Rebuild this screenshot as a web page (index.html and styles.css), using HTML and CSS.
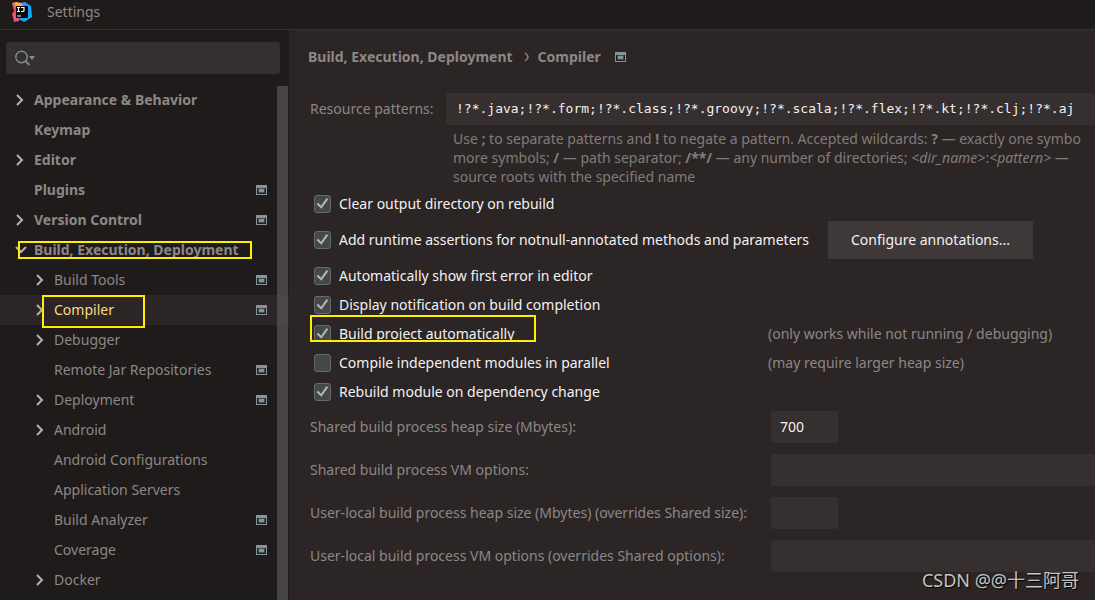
FILE: index.html
```html
<!DOCTYPE html>
<html lang="en">
<head>
<meta charset="utf-8">
<title>Settings</title>
<link rel="stylesheet" href="styles.css">
</head>
<body>
<svg class="defs" aria-hidden="true">
  <symbol id="chevron" viewBox="0 0 10 12"><path d="M2 1l5 5-5 5" fill="none" stroke="currentColor" stroke-width="2"/></symbol>
  <symbol id="chevron-down" viewBox="0 0 12 10"><path d="M1 2l5 5 5-5" fill="none" stroke="currentColor" stroke-width="2"/></symbol>
  <symbol id="project" viewBox="0 0 11 10"><path d="M0 0h11v10H0z" fill="#87939a"/><path d="M1 3h9v6H1z" fill="#231f1f"/><path d="M3 4h5v3H3z" fill="#87939a"/><path d="M2.500 3.500h6v4h-6z" fill="none" stroke="#46494b"/></symbol>
</svg>
<div class="window">
  <header class="titlebar">
    <svg class="logo" viewBox="0 0 20 20" aria-hidden="true">
      <defs>
        <linearGradient id="warm" x1="0" y1="0" x2="0" y2="1"><stop offset="0" stop-color="#fc8f35"/><stop offset=".4" stop-color="#e93b73"/><stop offset=".7" stop-color="#f45b45"/><stop offset="1" stop-color="#d84cc0"/></linearGradient>
        <linearGradient id="cool" x1="0" y1="0" x2="1" y2="1"><stop offset="0" stop-color="#a66ad8"/><stop offset=".4" stop-color="#139dff"/><stop offset="1" stop-color="#08b8f2"/></linearGradient>
      </defs>
      <path d="M0 1l4-1 4 2 2 8-3 9-5 1-1-5L0 12l2-3z" fill="url(#warm)"/>
      <path d="M8 1l5-1 6 4 1 11-8 5-5-3z" fill="url(#cool)"/>
      <path d="M4 0l5 1 2 3H3z" fill="#ffb340"/>
      <path d="M4 4h12v12H4z" fill="#080408"/>
      <path d="M5 5.500h3M6.500 5.500v4M5 9.500h3M9 5.500h3v3q0 1-1 1H9M5 14h4" fill="none" stroke="#fff" stroke-width="1.200"/>
    </svg>
    <h1 class="title">Settings</h1>
  </header>
  <div class="body">
    <aside class="sidebar">
      <div class="search">
        <svg class="search-icon" viewBox="0 0 20 16" aria-hidden="true"><circle cx="6.500" cy="7" r="5.700" fill="none" stroke="#7f8b91" stroke-width="1.400"/><path d="M10.500 11l4 4" stroke="#7f8b91" stroke-width="2"/><path d="M14 6h6l-3 4z" fill="#7f8b91"/></svg>
        <input class="search-input" type="text" aria-label="Search settings">
      </div>
      <div class="tree-area">
        <ul class="tree">
          <li class="node top"><svg class="arrow"><use href="#chevron"/></svg><span>Appearance &amp; Behavior</span></li>
          <li class="node top"><span class="arrow"></span><span>Keymap</span></li>
          <li class="node top"><svg class="arrow"><use href="#chevron"/></svg><span>Editor</span></li>
          <li class="node top"><span class="arrow"></span><span>Plugins</span><svg class="badge"><use href="#project"/></svg></li>
          <li class="node top"><svg class="arrow"><use href="#chevron"/></svg><span>Version Control</span><svg class="badge"><use href="#project"/></svg></li>
          <li class="node top"><svg class="arrow open"><use href="#chevron-down"/></svg><span>Build, Execution, Deployment</span><i class="mark mark-group"></i></li>
          <li class="node"><svg class="arrow"><use href="#chevron"/></svg><span>Build Tools</span><svg class="badge"><use href="#project"/></svg></li>
          <li class="node selected"><svg class="arrow"><use href="#chevron"/></svg><span>Compiler</span><svg class="badge"><use href="#project"/></svg><i class="mark mark-item"></i></li>
          <li class="node"><svg class="arrow"><use href="#chevron"/></svg><span>Debugger</span></li>
          <li class="node"><span class="arrow"></span><span>Remote Jar Repositories</span><svg class="badge"><use href="#project"/></svg></li>
          <li class="node"><svg class="arrow"><use href="#chevron"/></svg><span>Deployment</span><svg class="badge"><use href="#project"/></svg></li>
          <li class="node"><svg class="arrow"><use href="#chevron"/></svg><span>Android</span></li>
          <li class="node"><span class="arrow"></span><span>Android Configurations</span></li>
          <li class="node"><span class="arrow"></span><span>Application Servers</span></li>
          <li class="node"><span class="arrow"></span><span>Build Analyzer</span><svg class="badge"><use href="#project"/></svg></li>
          <li class="node"><span class="arrow"></span><span>Coverage</span><svg class="badge"><use href="#project"/></svg></li>
          <li class="node"><svg class="arrow"><use href="#chevron"/></svg><span>Docker</span></li>
        </ul>
        <div class="scrollbar"></div>
      </div>
    </aside>
    <main class="content">
      <nav class="crumbs"><span>Build, Execution, Deployment</span><svg class="crumb-sep" viewBox="0 0 5 10"><path d="M1 1q3 2 3 4T1 9" fill="none" stroke="currentColor" stroke-width="1.500"/></svg><span>Compiler</span><svg class="crumb-icon"><use href="#project"/></svg></nav>
      <div class="patterns">
        <label for="patterns">Resource patterns:</label>
        <div>
          <input class="field mono" id="patterns" type="text" value="!?*.java;!?*.form;!?*.class;!?*.groovy;!?*.scala;!?*.flex;!?*.kt;!?*.clj;!?*.aj">
          <p class="hint">Use <b>;</b> to separate patterns and <b>!</b> to negate a pattern. Accepted wildcards: <b>?</b> — exactly one symbo<br>more symbols; <b>/</b> — path separator; <b>/**/</b> — any number of directories; <em>&lt;dir_name&gt;</em>:<em>&lt;pattern&gt;</em> —<br>source roots with the specified name</p>
        </div>
      </div>
      <div class="options">
        <div class="option"><label class="check"><input type="checkbox" checked>Clear output directory on rebuild</label></div>
        <div class="option with-button"><label class="check"><input type="checkbox" checked>Add runtime assertions for notnull-annotated methods and parameters</label><button class="button" type="button">Configure annotations...</button></div>
        <div class="option"><label class="check"><input type="checkbox" checked>Automatically show first error in editor</label></div>
        <div class="option"><label class="check"><input type="checkbox" checked>Display notification on build completion</label></div>
        <div class="option"><label class="check cut"><input type="checkbox" checked>Build project automatically</label><span class="note">(only works while not running / debugging)</span><i class="mark mark-option"></i></div>
        <div class="option"><label class="check"><input type="checkbox">Compile independent modules in parallel</label><span class="note">(may require larger heap size)</span></div>
        <div class="option"><label class="check"><input type="checkbox" checked>Rebuild module on dependency change</label></div>
      </div>
      <div class="form">
        <label for="heap">Shared build process heap size (Mbytes):</label><input class="field small" id="heap" type="text" value="700">
        <label for="vm">Shared build process VM options:</label><input class="field" id="vm" type="text">
        <label for="user-heap">User-local build process heap size (Mbytes) (overrides Shared size):</label><input class="field small" id="user-heap" type="text">
        <label for="user-vm">User-local build process VM options (overrides Shared options):</label><input class="field" id="user-vm" type="text">
      </div>
    </main>
  </div>
  <div class="watermark">CSDN @@十三阿哥</div>
</div>
</body>
</html>
```
FILE: styles.css
```css
* { box-sizing: border-box; }
body {
  margin: 0;
  background: #2b2525;
  color: #8d8787;
  font: 14px/20px "Noto Sans", "Open Sans", sans-serif;
}
input, button { font: inherit; color: inherit; border: 0; margin: 0; }
.defs { display: none; }
.window { position: relative; display: flex; flex-direction: column; height: 100vh; overflow: hidden; }
.titlebar {
  display: flex;
  flex: none;
  align-items: center;
  gap: 15px;
  height: 30px;
  padding: 0 12px 6px;
  background: #1f1b1a;
  border-bottom: 1px solid #383131;
}
.logo { width: 20px; height: 20px; }
.title { margin: 0; font-size: 14px; font-weight: 400; }
.body { display: flex; flex: 1; min-height: 0; }

.sidebar {
  display: flex;
  flex-direction: column;
  flex: none;
  width: 289px;
  padding-top: 12px;
  background: #1f1b1a;
}
.search {
  display: flex;
  flex: none;
  align-items: center;
  height: 32px;
  margin: 0 9px 11px 6px;
  padding: 0 9px;
  border-radius: 3px;
  background: #352f2f;
}
.search-icon { width: 20px; height: 16px; }
.search-input { flex: 1; min-width: 0; background: transparent; outline: 0; }
.tree-area { position: relative; flex: 1; min-height: 0; }
.tree { margin: 0; padding: 0; list-style: none; }
.node {
  position: relative;
  display: flex;
  align-items: center;
  height: 30px;
  padding: 0 22px 0 35px;
  line-height: 22px;
  white-space: nowrap;
}
.node.top { padding-left: 15px; font-weight: 700; }
.arrow { flex: none; width: 10px; height: 12px; margin-right: 9px; color: #b3b0b0; }
.arrow.open { width: 12px; height: 10px; margin-right: 7px; }
.badge { width: 11px; height: 10px; margin-left: auto; }
.selected { background: #2b2525; color: #ffd980; }
.scrollbar {
  position: absolute;
  top: 1px;
  right: 1px;
  bottom: 0;
  width: 11px;
  background: #5f5a59a6;
}
.mark { position: absolute; border: 2px solid #ffee00; pointer-events: none; }
.mark-group { top: 6px; left: 18px; width: 234px; height: 18px; }
.mark-item { top: 0; left: 42px; width: 103px; height: 33px; }
.mark-option { top: -4px; left: 1px; width: 226px; height: 27px; }

.content { flex: 1; min-width: 0; padding: 17px 0 0 19px; overflow: hidden; white-space: nowrap; }
.crumbs { display: flex; align-items: center; height: 20px; font-weight: 700; }
.crumb-sep { width: 5px; height: 10px; margin: 0 9px 0 11px; }
.crumb-icon { width: 11px; height: 10px; margin-left: 14px; }
.patterns { display: grid; grid-template-columns: 136px minmax(0, 1fr); margin-top: 26px; padding-left: 2px; line-height: 32px; }
.field {
  display: block;
  width: 100%;
  height: 32px;
  padding: 0 9px;
  border-radius: 2px;
  background: #352f2f;
  color: #f4f1f1;
  outline: 0;
}
.mono { padding: 0 10px; font-family: "DejaVu Sans Mono", monospace; font-size: 13px; }
.hint { margin: 4px 0 0 7px; line-height: 19px; color: #817c7a; }
.options { margin: 3px 0 0 1px; }
.option { position: relative; display: grid; grid-template-columns: 459px auto; align-items: center; height: 29px; justify-content: start; }
.with-button { grid-template-columns: 519px auto; height: 43px; }
.check { display: flex; align-items: center; gap: 8px; height: 29px; padding-left: 5px; color: #f4f1f1; }
.cut { clip-path: inset(0 0 6px); }
.check input {
  appearance: none;
  display: grid;
  place-items: center;
  width: 17px;
  height: 18px;
  border: 1px solid #686a6a;
  border-radius: 3px;
  background: #43494a;
}
.check input:checked::before {
  content: "";
  width: 12px;
  height: 12px;
  background: #b4b3b3;
  clip-path: polygon(0 56%, 14% 43%, 38% 68%, 83% 4%, 98% 15%, 41% 94%);
}
.button { height: 38px; padding: 0 23px; background: #3f3838; color: #f4f1f1; }
.form { display: grid; grid-template-columns: 461px minmax(0, 1fr); row-gap: 11px; margin-top: 5px; padding-left: 2px; line-height: 32px; }
.small { width: 67px; }
.watermark {
  position: absolute;
  right: 16px;
  bottom: 7px;
  color: #c5c2c2;
  font: 18px/26px "Noto Sans", "Noto Sans CJK SC", sans-serif;
  text-shadow: 1px 1px 1px #000;
}
```
